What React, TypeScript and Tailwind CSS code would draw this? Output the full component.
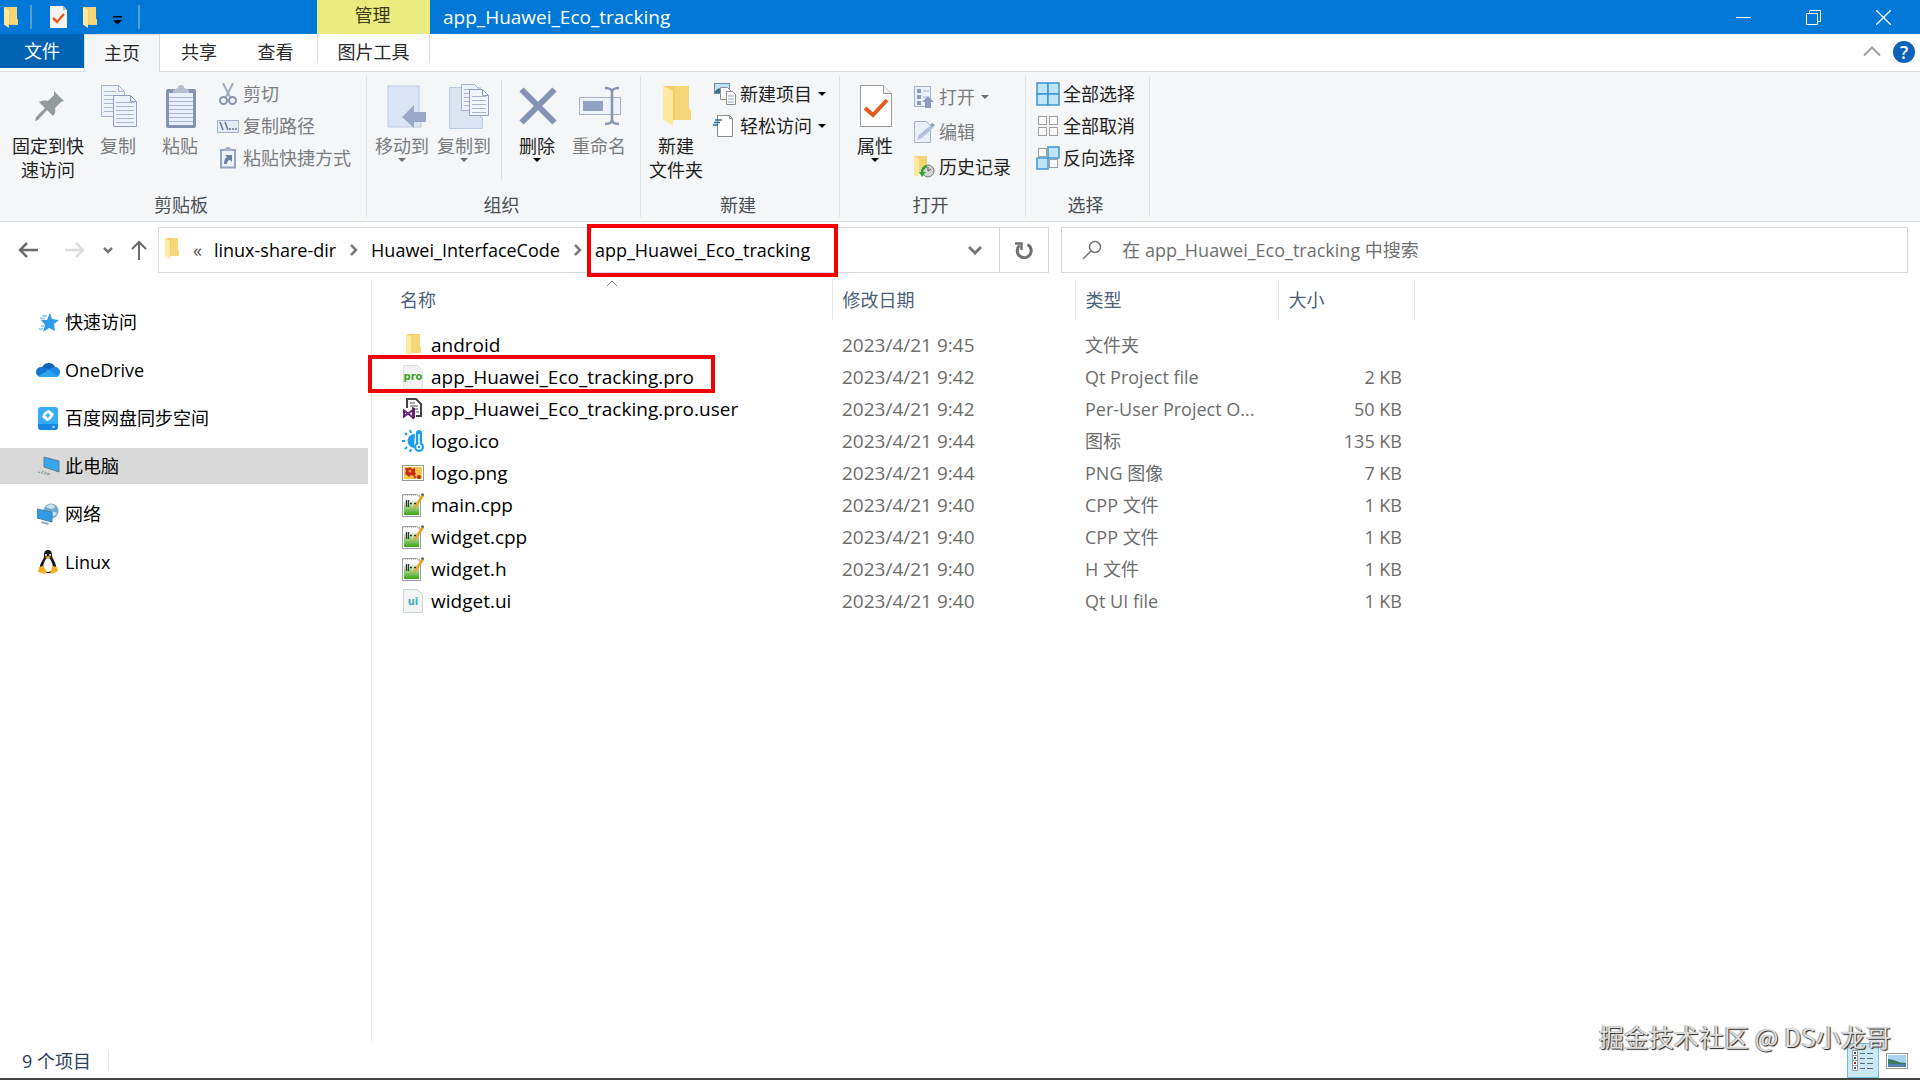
import type { ReactNode } from "react";

/* ---------- shared shapes ---------- */

function Folder({ className = "w-[15px] h-[22px]" }: { className?: string }) {
  return (
    <svg viewBox="0 0 28 40" className={className} preserveAspectRatio="none" aria-hidden="true">
      <path d="M1 0h25v22l2 3v9H8L1 32z" fill="#f3cf68" />
      <path d="M12 0h14v22l2 3v9H12z" fill="#f6d778" />
      <path d="M0 0l10 5v35l-6-4-4-2z" fill="#ffe9a2" />
    </svg>
  );
}

function Caret({ className = "text-black" }: { className?: string }) {
  return (
    <svg viewBox="0 0 8 4" className={"h-1 w-2 shrink-0 " + className} aria-hidden="true">
      <path d="M0 0h8L4 4z" fill="currentColor" />
    </svg>
  );
}

function SheetLines({ x, y, w, n, gap = 4 }: { x: number; y: number; w: number; n: number; gap?: number }) {
  return (
    <g stroke="#a9b6d2" strokeWidth="1">
      {Array.from({ length: n }, (_, i) => (
        <path key={i} d={`M${x} ${y + i * gap + 0.5}h${w}`} />
      ))}
    </g>
  );
}

/* ---------- large ribbon icons ---------- */

const PinIcon = () => (
  <svg width="32" height="32" viewBox="0 0 32 32" aria-hidden="true">
    <path d="M21 1l10 10-3 1-6 6c1 3 0 6-2 8l-6-6-9 10-3 1 1-4 9-9-6-6c2-1 6-2 9-1l6-6z" fill="#949a9b" />
  </svg>
);

const CopyIcon = () => (
  <svg width="36" height="42" viewBox="0 0 36 42" aria-hidden="true">
    <path d="M.5.5h17l6 6v25h-23z" fill="#eef3fb" stroke="#a5b3d1" />
    <path d="M17.5.5v6h6" fill="none" stroke="#a5b3d1" />
    <SheetLines x={3} y={6} w={12} n={6} />
    <path d="M12.5 10.5h17l6 6v25h-23z" fill="#eef3fb" stroke="#8f9fc4" />
    <path d="M29.5 10.5v6h6" fill="none" stroke="#8f9fc4" />
    <SheetLines x={15} y={17} w={18} n={6} />
  </svg>
);

const PasteIcon = () => (
  <svg width="30" height="43" viewBox="0 0 30 43" aria-hidden="true">
    <rect x="0" y="4" width="30" height="39" rx="2" fill="#8492b4" />
    <rect x="3" y="8" width="24" height="32" fill="#e9f0fb" />
    <SheetLines x={3} y={12} w={24} n={7} />
    <path d="M7 8V5l5-2a3 3 0 016 0l5 2v3z" fill="#b5bdcf" />
  </svg>
);

const MoveIcon = () => (
  <svg width="48" height="43" viewBox="-8 0 48 43" aria-hidden="true">
    <path d="M1 1h31v30h2v11H1z" fill="#dbe4f3" stroke="#bdcae3" />
    <path d="M15 32l12-12v7h12v10H27v6z" fill="#9ba9c8" />
  </svg>
);

const CopyToIcon = () => (
  <svg width="48" height="45" viewBox="-8 0 48 45" aria-hidden="true">
    <path d="M.5 3.5h31v30h2v11H.5z" fill="#dbe4f3" stroke="#bdcae3" />
    <path d="M12.5.5h13l5 5v21h-18z" fill="#eef3fb" stroke="#a5b3d1" />
    <SheetLines x={15} y={5} w={9} n={5} />
    <path d="M20.5 5.5h13l6 6v20h-19z" fill="#f3f7fd" stroke="#8f9fc4" />
    <path d="M33.5 5.5v6h6" fill="none" stroke="#8f9fc4" />
    <SheetLines x={23} y={12} w={14} n={5} />
  </svg>
);

const DeleteIcon = () => (
  <svg width="38" height="38" viewBox="0 0 38 38" aria-hidden="true">
    <path d="M2.5 2.5l33 33M35.5 2.5l-33 33" stroke="#8492b6" strokeWidth="6" />
  </svg>
);

const RenameIcon = () => (
  <svg width="42" height="40" viewBox="0 0 42 40" aria-hidden="true">
    <rect x=".5" y="11.5" width="41" height="17" fill="#edf2fb" stroke="#a5b3d1" />
    <rect x="4" y="15" width="20" height="10" fill="#93a1c3" />
    <path d="M26 2c5 0 7 1 7 5v26c0 4-2 5-7 5M40 2c-5 0-7 1-7 5v26c0 4 2 5 7 5" fill="none" stroke="#8793b4" strokeWidth="2.5" />
  </svg>
);

const PropertiesIcon = () => (
  <svg width="32" height="42" viewBox="0 0 32 42" aria-hidden="true">
    <path d="M.5.5h23l8 8v33H.5z" fill="#fff" stroke="#9b9b9b" />
    <path d="M23.5.5v8h8" fill="#eee" stroke="#9b9b9b" />
    <path d="M5 23l8 7 14-15" fill="none" stroke="#e8591c" strokeWidth="4" />
  </svg>
);

/* ---------- small ribbon icons ---------- */

const CutIcon = () => (
  <svg width="22" height="22" viewBox="0 0 22 22" fill="none" aria-hidden="true">
    <path d="M6 0l7 14M16 0L9 14" stroke="#a3abc0" strokeWidth="2" />
    <ellipse cx="6.5" cy="17.500" rx="3.500" ry="3.500" stroke="#8793b4" strokeWidth="2" />
    <ellipse cx="15.5" cy="17.500" rx="3.500" ry="3.500" stroke="#8793b4" strokeWidth="2" />
  </svg>
);

const PathIcon = () => (
  <svg width="22" height="22" viewBox="0 0 22 22" aria-hidden="true">
    <rect x=".5" y="5.5" width="21" height="12" fill="#e3ebf8" stroke="#a5b3d1" />
    <path d="M3 7l3 8M8 7l3 8" stroke="#6b7794" strokeWidth="1.5" />
    <path d="M12 14h2m1 0h2m1 0h2" stroke="#6b7794" strokeWidth="1.5" />
  </svg>
);

const PasteLinkIcon = () => (
  <svg width="22" height="22" viewBox="0 0 22 22" aria-hidden="true">
    <rect x="4" y="3" width="14" height="17.5" fill="#eef3fb" stroke="#94a2c3" strokeWidth="2" />
    <path d="M7 4V2l2-1a2 2 0 014 0l2 1v2z" fill="#a7b2ca" />
    <path d="M7 17c0-4 1-6 3-7l-2-2h7v7l-2-2c-2 0-3 2-3 4z" fill="#6e7ea5" />
  </svg>
);

const NewItemIcon = () => (
  <svg width="24" height="24" viewBox="0 0 24 24" aria-hidden="true">
    <rect x="1.5" y="1.5" width="15" height="10" fill="#bfe2f7" stroke="#6d8ba3" />
    <path d="M2 9l4-3 4 3 3-2v4H2z" fill="#3d6f86" />
    <path d="M7.5 5.5h7l3 3v9h-10z" fill="#fff" stroke="#8c8c8c" />
    <path d="M13.5 9.5h6l3 3v10h-9z" fill="#fff" stroke="#8c8c8c" />
    <path d="M15 14h6M15 17h6M15 20h6" stroke="#8fa3d0" />
  </svg>
);

const EasyAccessIcon = () => (
  <svg width="24" height="24" viewBox="0 0 24 24" aria-hidden="true">
    <path d="M4.5 1.500h12l3 3v18h-15z" fill="#fff" stroke="#8c8c8c" />
    <path d="M16.5 1.500v3h3" fill="none" stroke="#8c8c8c" />
    <path d="M2 6h7M1 8.500h6M0 11h5" stroke="#2f6f9f" strokeWidth="1.5" />
  </svg>
);

const OpenIcon = () => (
  <svg width="22" height="24" viewBox="0 0 22 24" aria-hidden="true">
    <rect x="1.5" y="1.5" width="16" height="20" fill="#eaf0fa" stroke="#a5b3d1" />
    <path d="M4 4h4v4H4zM4 10h4v4H4zM4 16h4v4H4z" fill="#8d9bbd" />
    <path d="M10 6h6M10 12h4" stroke="#a5b3d1" />
    <path d="M15 11l6 6h-3v6h-6v-6H9z" fill="#8d9bbd" />
  </svg>
);

const EditIcon = () => (
  <svg width="22" height="24" viewBox="0 0 22 24" aria-hidden="true">
    <path d="M1.5 1.500h12l4 4v17h-16z" fill="#eaf0fa" stroke="#a5b3d1" />
    <path d="M4 20l2-5L18 5l3 2L9 18z" fill="#b5c1dc" />
    <path d="M17 5l2-2 3 2-2 2z" fill="#8d9bbd" />
  </svg>
);

const HistoryIcon = () => (
  <svg width="22" height="24" viewBox="0 0 22 24" aria-hidden="true">
    <path d="M1 1h13v18H6l-5 1z" fill="#f5d473" />
    <path d="M1 1l5 3v18l-5-2z" fill="#ffe9a2" />
    <circle cx="15" cy="16" r="6" fill="#d5d5d5" stroke="#777" />
    <path d="M15 12v4l3-2" fill="none" stroke="#555" />
    <path d="M9 18c0-4 2-6 5-7" fill="none" stroke="#2ea43a" strokeWidth="2.5" />
    <path d="M6 17h7l-4 5z" fill="#2ea43a" />
  </svg>
);

function Quad({ on }: { on: boolean[] }) {
  const at = [
    [1, 1],
    [12, 1],
    [1, 12],
    [12, 12],
  ];
  return (
    <svg width="24" height="24" viewBox="0 0 24 24" aria-hidden="true">
      {at.map(([x, y], i) =>
        on[i] ? (
          <rect key={i} x={x} y={y} width="11" height="11" fill="#bfe5fb" stroke="#3e96cf" strokeWidth="1.5" />
        ) : (
          <rect key={i} x={x + 1.5} y={y + 1.5} width="8" height="8" fill="#fafafa" stroke="#a0a0a0" />
        ),
      )}
    </svg>
  );
}

/* ---------- sidebar icons ---------- */

const StarIcon = () => (
  <svg width="22" height="22" viewBox="0 0 22 22" aria-hidden="true">
    <path d="M13 2l2 6 7 1-5 4 1 7-6-3-6 4 2-7-4-5h6z" fill="#2f9bea" />
    <path d="M5 5h5M3 7.500h5M4 15h3M2 18h4" stroke="#7fc3f3" strokeWidth="1.5" />
  </svg>
);

const CloudIcon = () => (
  <svg width="24" height="18" viewBox="0 0 24 18" aria-hidden="true">
    <path d="M6 7a7 7 0 0113-1c3 0 5 3 5 6H6z" fill="#0f5fb4" />
    <path d="M5 6c4-1 7 2 10 4L5 16a5 5 0 010-10z" fill="#1275cf" />
    <path d="M9 9l9-3c4 0 6 3 6 5 0 3-2 5-4 5z" fill="#1c8be4" />
    <path d="M2 15L13 9l9 6c-1 1-1 1-3 1H5c-1 0-2 0-3-1z" fill="#2aa7ef" />
  </svg>
);

const BaiduIcon = () => (
  <svg width="20" height="23" viewBox="0 0 20 23" aria-hidden="true">
    <rect width="20" height="22" rx="3" fill="#35adf9" />
    <path d="M0 17h20v3a3 3 0 01-3 3H3a3 3 0 01-3-3z" fill="#1488e6" />
    <path d="M8 4l3-1 5 4-1 2-3-1zM12 13l-3 1-5-4 1-2 3 1z" fill="#fff" />
    <path d="M5 7l3-3 2 2-4 4zM15 9l-3 4-2-2 3-4z" fill="#fff" />
    <path d="M14 20h3" stroke="#fff" />
  </svg>
);

const PcIcon = () => (
  <svg width="24" height="22" viewBox="0 0 24 22" aria-hidden="true">
    <path d="M8 2l15 4v11L8 12z" fill="#36a6ef" stroke="#5c7d95" />
    <path d="M0 17l8-1 10 3-7 2z" fill="#cdd3d6" />
    <path d="M2 17l12 3M6 16l8 3" stroke="#8f979b" strokeDasharray="2 1" />
  </svg>
);

const NetworkIcon = () => (
  <svg width="22" height="22" viewBox="0 0 22 22" aria-hidden="true">
    <circle cx="14" cy="8" r="7.5" fill="#70a9cf" />
    <path d="M9 4c3-4 8-3 9 0-2 3-5 2-9 0zM15 9c3-1 5 1 5 2l-4 3z" fill="#c8dfec" />
    <path d="M0 6l15 3v10L0 15z" fill="#2f9be6" stroke="#4b7fa5" />
    <path d="M5 18l7 2-1 2-7-2z" fill="#9ab0bd" />
  </svg>
);

const TuxIcon = () => (
  <svg width="20" height="24" viewBox="0 0 20 24" aria-hidden="true">
    <path d="M10 0c3 0 4 2 4 6 1 4 4 6 4 11 0 4-4 6-8 6s-8-2-8-6c0-5 4-7 4-11 0-4 1-6 4-6z" fill="#171717" />
    <path d="M10 8c2 0 3 2 4 5 2 5 0 9-4 9s-6-4-4-9c1-3 2-5 4-5z" fill="#fff" />
    <circle cx="8" cy="5" r="1" fill="#fff" />
    <circle cx="12" cy="5" r="1" fill="#fff" />
    <path d="M7 7l3-1 3 1-3 2z" fill="#f0b21a" />
    <path d="M1 17l4-1 4 6-2 2-7-2zM19 17l-4-1-3 6 2 2 6-3z" fill="#efb01c" />
  </svg>
);

/* ---------- file icons ---------- */

const ProIcon = () => (
  <svg width="22" height="24" viewBox="0 0 22 24" aria-hidden="true">
    <path d="M1.5.5h14l5 5v18h-19z" fill="#f3f3f3" stroke="#e0e0e0" />
    <text x="11" y="15" textAnchor="middle" fontFamily="DejaVu Sans, sans-serif" fontSize="10" fontWeight="700" fill="#3aa51f">
      pro
    </text>
  </svg>
);

const UiIcon = () => (
  <svg width="22" height="24" viewBox="0 0 22 24" aria-hidden="true">
    <path d="M1.5.5h14l5 5v18h-19z" fill="#f1f5f6" stroke="#cfd4d6" />
    <text x="11" y="16" textAnchor="middle" fontFamily="DejaVu Sans, sans-serif" fontSize="10" fontWeight="700" fill="#3fb0bd">
      ui
    </text>
  </svg>
);

const VsIcon = () => (
  <svg width="22" height="24" viewBox="0 0 22 24" aria-hidden="true">
    <path d="M5 11V2h9l5 5v12h-5" fill="#fff" stroke="#444" strokeWidth="2" />
    <path d="M8 6h5M8 9h8M11 12h5M14 15h3" stroke="#555" />
    <path d="M2 13.500l9 7V13l-9 6.500z" fill="none" stroke="#68217a" strokeWidth="2" />
    <path d="M10 10l3 1v10l-3 1z" fill="#68217a" />
  </svg>
);

const ThermoIcon = () => (
  <svg width="22" height="24" viewBox="0 0 22 24" aria-hidden="true">
    <path d="M13 5a7 7 0 00-1 14z" fill="#1c9fe8" />
    <path d="M0 12h3M3 4l2 2M8 1l1 3M3 20l2-2M8 23l1-3" stroke="#1c9fe8" strokeWidth="2" />
    <path d="M14 4a3 3 0 016 0v10a5 5 0 11-6 0z" fill="#1c9fe8" />
    <path d="M17 5v11" stroke="#fff" strokeWidth="1.5" />
    <circle cx="17" cy="18" r="2" fill="#1c9fe8" stroke="#fff" strokeWidth="1.5" />
  </svg>
);

const PngIcon = () => (
  <svg width="22" height="24" viewBox="0 0 22 24" aria-hidden="true">
    <rect x=".5" y="4.5" width="21" height="15" fill="#fff" stroke="#999" />
    <rect x="2" y="6" width="18" height="12" fill="#f6c64a" />
    <path d="M3 7h3l2-1 2 2 3-1v4l1 2-2 2-3-1-2 2-2-2-2-1 1-3z" fill="#c9281a" />
    <circle cx="8" cy="10" r="1.5" fill="#f39a1d" />
    <circle cx="17" cy="16" r="2" fill="#b3261a" />
    <circle cx="13" cy="16" r="1.5" fill="#d2452a" />
  </svg>
);

const CppIcon = () => (
  <svg width="22" height="24" viewBox="0 0 22 24" aria-hidden="true">
    <defs>
      <linearGradient id="leaf" x1="0" y1="0" x2="0" y2="1">
        <stop offset="0" stopColor="#eaf7d8" />
        <stop offset="1" stopColor="#3ba316" />
      </linearGradient>
    </defs>
    <path d="M.5 1.500h14l4 3v19H.5z" fill="#fff" stroke="#9aa39a" />
    <rect x="2" y="8" width="15" height="14" fill="url(#leaf)" />
    <path d="M1 2h17" stroke="#999" strokeDasharray="1 1" />
    <path d="M4.5 7v7M6.500 7v7M8 10.500h2M12 10.500h2" stroke="#333" strokeWidth="1.3" />
    <path d="M12 16l1-4L20 1l2 2-8 12z" fill="#e6a323" />
    <path d="M19 2l1-2 2 1v2z" fill="#666" />
  </svg>
);

/* ---------- ribbon building blocks ---------- */

function Group({ label, width, children }: { label: string; width: string; children: ReactNode }) {
  return (
    <section className={"my-1 flex shrink-0 flex-col justify-between border-r border-[#e0e3e6] " + width}>
      <div className="flex pt-1">{children}</div>
      <h2 className="pr-1 text-center text-lg leading-6 text-[#4a4f55]">{label}</h2>
    </section>
  );
}

function Big({
  icon,
  label,
  width,
  off,
  caret,
}: {
  icon: ReactNode;
  label: ReactNode;
  width: string;
  off?: boolean;
  caret?: boolean;
}) {
  return (
    <button
      type="button"
      className={
        "flex shrink-0 flex-col items-center whitespace-nowrap text-lg leading-6 " +
        (off ? "text-[#7b7d80] " : "text-[#1f1f1f] ") +
        width
      }
    >
      <span className="mb-0.5 flex h-[52px] items-center pl-0.5">{icon}</span>
      <span>{label}</span>
      {caret && <Caret className={off ? "text-[#6d6d6d]" : "text-black"} />}
    </button>
  );
}

function Small({ icon, label, off, caret }: { icon: ReactNode; label: string; off?: boolean; caret?: boolean }) {
  return (
    <button
      type="button"
      className={"flex items-center whitespace-nowrap text-lg leading-6 " + (off ? "text-[#7b7d80]" : "text-[#1f1f1f]")}
    >
      <span className="mr-[3px] flex w-6 justify-center">{icon}</span>
      <span>{label}</span>
      {caret && (
        <span className="ml-1.5">
          <Caret className={off ? "text-[#6d6d6d]" : "text-black"} />
        </span>
      )}
    </button>
  );
}

/* ---------- data ---------- */

const places = [
  { name: "快速访问", icon: <StarIcon /> },
  { name: "OneDrive", icon: <CloudIcon /> },
  { name: "百度网盘同步空间", icon: <BaiduIcon /> },
  { name: "此电脑", icon: <PcIcon />, active: true },
  { name: "网络", icon: <NetworkIcon /> },
  { name: "Linux", icon: <TuxIcon /> },
];

const files = [
  { name: "android", icon: <Folder />, date: "2023/4/21 9:45", type: "文件夹", size: "" },
  { name: "app_Huawei_Eco_tracking.pro", icon: <ProIcon />, date: "2023/4/21 9:42", type: "Qt Project file", size: "2 KB", marked: true },
  { name: "app_Huawei_Eco_tracking.pro.user", icon: <VsIcon />, date: "2023/4/21 9:42", type: "Per-User Project O...", size: "50 KB" },
  { name: "logo.ico", icon: <ThermoIcon />, date: "2023/4/21 9:44", type: "图标", size: "135 KB" },
  { name: "logo.png", icon: <PngIcon />, date: "2023/4/21 9:44", type: "PNG 图像", size: "7 KB" },
  { name: "main.cpp", icon: <CppIcon />, date: "2023/4/21 9:40", type: "CPP 文件", size: "1 KB" },
  { name: "widget.cpp", icon: <CppIcon />, date: "2023/4/21 9:40", type: "CPP 文件", size: "1 KB" },
  { name: "widget.h", icon: <CppIcon />, date: "2023/4/21 9:40", type: "H 文件", size: "1 KB" },
  { name: "widget.ui", icon: <UiIcon />, date: "2023/4/21 9:40", type: "Qt UI file", size: "1 KB" },
];

function Crumb({ children, marked }: { children: string; marked?: boolean }) {
  return (
    <span className="relative flex h-full items-center">
      <a href="#" className="text-black">
        {children}
      </a>
      {marked && <span className="pointer-events-none absolute -bottom-[5px] -left-2 -right-7 -top-1 border-4 border-[#f50000]" />}
    </span>
  );
}

const CrumbArrow = () => (
  <svg width="9" height="12" viewBox="0 0 9 12" className="mx-[13px] shrink-0" fill="none" aria-hidden="true">
    <path d="M2 1l5 5-5 5" stroke="#7a7a7a" strokeWidth="2.5" />
  </svg>
);

/* ---------- page ---------- */

export default function App() {
  return (
    <div className="relative flex min-h-screen flex-col bg-white font-['Open_Sans','Noto_Sans_CJK_SC',sans-serif] text-lg leading-6 text-black">
      {/* title bar */}
      <header className="flex h-[34px] shrink-0 items-stretch bg-[#0078d7] text-white">
        <div className="flex w-[317px] shrink-0 items-center">
          <span className="ml-1">
            <Folder className="h-[21px] w-[14px]" />
          </span>
          <span className="ml-3 h-6 w-0.5 bg-[#5b9bd0]" />
          <button type="button" aria-label="属性" className="ml-[18px]">
            <svg width="17" height="22" viewBox="0 0 17 22" aria-hidden="true">
              <path d="M0 0h13l4 4v18H0z" fill="#f6f4f2" />
              <path d="M13 0v4h4z" fill="#b9b9b9" />
              <path d="M3 12l4 4 7-8" fill="none" stroke="#e8591c" strokeWidth="2.5" />
            </svg>
          </button>
          <button type="button" aria-label="新建文件夹" className="ml-4">
            <Folder className="h-[21px] w-[14px]" />
          </button>
          <button type="button" aria-label="自定义快速访问工具栏" className="ml-4 pt-1.5">
            <svg width="9" height="9" viewBox="0 0 9 9" aria-hidden="true">
              <path d="M0 0h9v1.500H0zM0 4h9L4.500 8.500z" fill="#000" />
            </svg>
          </button>
          <span className="ml-4 h-6 w-0.5 bg-[#5b9bd0]" />
        </div>
        <div className="w-[113px] shrink-0 bg-[#ebec80] pr-0.5 pt-[3px] text-center text-[#3b3b1c]">管理</div>
        <h1 className="flex-1 self-center pl-[13px] text-[19px]">app_Huawei_Eco_tracking</h1>
        <div className="flex pr-0.5">
          <button type="button" aria-label="最小化" className="flex w-[70px] items-center justify-center">
            <svg width="15" height="15" viewBox="0 0 15 15" aria-hidden="true">
              <path d="M0 7.500h15" stroke="#fff" />
            </svg>
          </button>
          <button type="button" aria-label="向下还原" className="flex w-[70px] items-center justify-center">
            <svg width="15" height="15" viewBox="0 0 15 15" fill="none" stroke="#fff" aria-hidden="true">
              <path d="M.5 3.500h11v11H.5zM3.500 3.500v-3h11v11h-3" />
            </svg>
          </button>
          <button type="button" aria-label="关闭" className="flex w-[70px] items-center justify-center">
            <svg width="15" height="15" viewBox="0 0 15 15" stroke="#fff" aria-hidden="true">
              <path d="M0 0l15 15M15 0L0 15" strokeWidth="1.3" />
            </svg>
          </button>
        </div>
      </header>

      {/* tabs */}
      <nav className="flex h-[38px] shrink-0 items-stretch border-b border-[#dadbdc] text-[#2b2b2b]">
        <button type="button" className="mb-[3px] w-[84px] bg-[#0063b1] text-white">
          文件
        </button>
        <button type="button" className="-mb-px w-[76px] border-x border-t border-[#dadbdc] bg-[#f5f6f7] pb-0.5">
          主页
        </button>
        <button type="button" className="w-[78px] pb-0.5">
          共享
        </button>
        <button type="button" className="w-[79px] pb-0.5 pr-1">
          查看
        </button>
        <button type="button" className="mb-2 w-[113px] border-x border-[#e3dcd6] pt-1.5">
          图片工具
        </button>
        <div className="flex flex-1 items-center justify-end gap-3 pb-0.5 pr-[5px]">
          <button type="button" aria-label="最小化功能区">
            <svg width="18" height="11" viewBox="0 0 18 11" fill="none" aria-hidden="true">
              <path d="M1 9.500l8-8 8 8" stroke="#a0a0a0" strokeWidth="2" />
            </svg>
          </button>
          <button
            type="button"
            aria-label="帮助"
            className="flex size-[22px] items-center justify-center rounded-full bg-[#0a63b8] font-semibold text-white"
          >
            ?
          </button>
        </div>
      </nav>

      {/* ribbon */}
      <div className="flex h-[150px] shrink-0 border-b border-[#dadbdc] bg-[#f5f6f7]">
        <Group label="剪贴板" width="w-[367px]">
          <div className="flex pl-2">
            <Big icon={<PinIcon />} label={<>固定到快<br />速访问</>} width="w-20" />
            <Big icon={<CopyIcon />} label="复制" width="w-[60px]" off />
            <Big icon={<PasteIcon />} label="粘贴" width="w-[64px]" off />
          </div>
          <div className="flex flex-col gap-2 pl-1 pt-0.5">
            <Small icon={<CutIcon />} label="剪切" off />
            <Small icon={<PathIcon />} label="复制路径" off />
            <Small icon={<PasteLinkIcon />} label="粘贴快捷方式" off />
          </div>
        </Group>
        <Group label="组织" width="w-[274px]">
          <div className="flex pl-1">
            <Big icon={<MoveIcon />} label="移动到" width="w-[62px]" off caret />
            <Big icon={<CopyToIcon />} label="复制到" width="w-[62px]" off caret />
            <span className="ml-1.5 mr-1 h-[100px] w-px bg-[#dcdfe2]" />
            <Big icon={<DeleteIcon />} label="删除" width="w-[62px]" caret />
            <Big icon={<RenameIcon />} label="重命名" width="w-[62px]" off />
          </div>
        </Group>
        <Group label="新建" width="w-[199px]">
          <Big icon={<Folder className="h-10 w-7" />} label={<>新建<br />文件夹</>} width="w-[70px]" />
          <div className="flex flex-col gap-2 pl-0.5 pt-0.5">
            <Small icon={<NewItemIcon />} label="新建项目" caret />
            <Small icon={<EasyAccessIcon />} label="轻松访问" caret />
          </div>
        </Group>
        <Group label="打开" width="w-[186px]">
          <Big icon={<PropertiesIcon />} label="属性" width="w-[70px]" caret />
          <div className="flex flex-col gap-[11px] pl-0.5 pt-[5px]">
            <Small icon={<OpenIcon />} label="打开" off caret />
            <Small icon={<EditIcon />} label="编辑" off />
            <Small icon={<HistoryIcon />} label="历史记录" />
          </div>
        </Group>
        <Group label="选择" width="w-[124px]">
          <div className="flex flex-col gap-2 pl-2.5 pt-0.5">
            <Small icon={<Quad on={[true, true, true, true]} />} label="全部选择" />
            <Small icon={<Quad on={[false, false, false, false]} />} label="全部取消" />
            <Small icon={<Quad on={[false, true, true, false]} />} label="反向选择" />
          </div>
        </Group>
      </div>

      {/* address bar */}
      <div className="flex h-[58px] shrink-0 items-start pr-3 pt-[5px]">
        <div className="flex h-[46px] w-[158px] shrink-0 items-center pl-[18px]">
          <button type="button" aria-label="后退">
            <svg width="20" height="16" viewBox="0 0 20 16" fill="none" stroke="#6b6b6b" strokeWidth="2.5" aria-hidden="true">
              <path d="M20 8H2M9 1L2 8l7 7" />
            </svg>
          </button>
          <button type="button" aria-label="前进" className="ml-[27px]">
            <svg width="20" height="16" viewBox="0 0 20 16" fill="none" stroke="#dcdcdc" strokeWidth="2.5" aria-hidden="true">
              <path d="M0 8h18M11 1l7 7-7 7" />
            </svg>
          </button>
          <button type="button" aria-label="最近浏览的位置" className="ml-[18px]">
            <svg width="10" height="7" viewBox="0 0 10 7" fill="none" stroke="#777" strokeWidth="2.5" aria-hidden="true">
              <path d="M1 1l4 4 4-4" />
            </svg>
          </button>
          <button type="button" aria-label="上移" className="ml-[18px]">
            <svg width="16" height="20" viewBox="0 0 16 20" fill="none" stroke="#6b6b6b" strokeWidth="2" aria-hidden="true">
              <path d="M8 20V2M1 9l7-7 7 7" />
            </svg>
          </button>
        </div>
        <div className="flex h-[46px] min-w-0 flex-[20] items-center border border-[#d9d9d9]">
          <Folder className="mb-1 ml-1.5 h-[21px] w-[14px] shrink-0" />
          <span className="ml-3.5 mr-3 text-[#555]">«</span>
          <Crumb>linux-share-dir</Crumb>
          <CrumbArrow />
          <Crumb>Huawei_InterfaceCode</Crumb>
          <CrumbArrow />
          <Crumb marked>app_Huawei_Eco_tracking</Crumb>
          <div className="ml-auto flex h-full">
            <button type="button" aria-label="以前的位置" className="flex w-12 items-center justify-center">
              <svg width="14" height="10" viewBox="0 0 14 10" fill="none" stroke="#777" strokeWidth="3" aria-hidden="true">
                <path d="M1 2l6 6 6-6" />
              </svg>
            </button>
            <button type="button" aria-label="刷新" className="flex w-[49px] items-center justify-center border-l border-[#d9d9d9]">
              <svg width="18" height="18" viewBox="0 0 18 18" fill="none" stroke="#707070" strokeWidth="3" aria-hidden="true">
                <path d="M12.5 3.500a7 7 0 11-8 1" />
                <path d="M0 2.500h6.500V9" strokeWidth="2.5" />
              </svg>
            </button>
          </div>
        </div>
        <label className="ml-3 flex h-[46px] min-w-0 flex-[19] items-center border border-[#d9d9d9]">
          <svg width="20" height="20" viewBox="0 0 20 20" className="ml-5" fill="none" stroke="#777" strokeWidth="1.5" aria-hidden="true">
            <circle cx="13" cy="7" r="5.5" />
            <path d="M9 11l-8 8" />
          </svg>
          <input
            type="text"
            aria-label="搜索"
            placeholder="在 app_Huawei_Eco_tracking 中搜索"
            className="ml-5 h-full min-w-0 flex-1 bg-transparent outline-none placeholder:text-[#6f6f6f]"
          />
        </label>
      </div>

      {/* places and file list */}
      <div className="flex flex-1">
        <aside className="w-[372px] shrink-0 border-r border-[#ececec] pr-[3px] pt-6">
          <ul className="flex flex-col gap-3">
            {places.map((p) => (
              <li key={p.name}>
                <a
                  href="#"
                  className={"flex h-9 items-center pl-9 " + (p.active ? "bg-[#d9d9d9]" : "")}
                >
                  <span className="mr-[5px] flex w-6 justify-center">{p.icon}</span>
                  {p.name}
                </a>
              </li>
            ))}
          </ul>
        </aside>
        <main className="min-w-0 flex-1">
          <table className="w-[1042px] table-fixed border-collapse text-left">
            <colgroup>
              <col className="w-[460px]" />
              <col className="w-[243px]" />
              <col className="w-[203px]" />
              <col className="w-[136px]" />
            </colgroup>
            <thead>
              <tr className="h-10 text-[#4c607a]">
                <th className="relative border-r border-[#e5e5e5] pl-7 font-normal">
                  名称
                  <svg width="12" height="7" viewBox="0 0 12 7" className="absolute left-[234px] top-0" fill="none" aria-hidden="true">
                    <path d="M1 6l5-5 5 5" stroke="#777" />
                  </svg>
                </th>
                <th className="border-r border-[#e5e5e5] pl-2.5 font-normal">修改日期</th>
                <th className="border-r border-[#e5e5e5] pl-2.5 font-normal">类型</th>
                <th className="border-r border-[#e5e5e5] pl-2.5 font-normal">大小</th>
              </tr>
            </thead>
            <tbody className="text-[#6d6d6d] before:block before:h-[9px]">
              {files.map((f) => (
                <tr key={f.name} className="h-8">
                  <td className="relative pl-[30px] text-[19px] text-black">
                    <span className="flex items-center">
                      <span className="mr-[7px] flex w-[22px] justify-center">{f.icon}</span>
                      {f.name}
                    </span>
                    {f.marked && (
                      <span className="pointer-events-none absolute -left-1 -top-1.5 bottom-0 w-[347px] border-4 border-[#f50000]" />
                    )}
                  </td>
                  <td className="pl-2.5 text-[19px]">{f.date}</td>
                  <td className="whitespace-nowrap pl-2.5">{f.type}</td>
                  <td className="pr-3 text-right">{f.size}</td>
                </tr>
              ))}
            </tbody>
          </table>
        </main>
      </div>

      {/* status bar */}
      <footer className="flex h-[37px] shrink-0 items-center border-b-2 border-[#454545] pl-[22px] text-[#2d405c]">
        <span>9 个项目</span>
        <span className="ml-[17px] h-5 w-px bg-[#e5e5e5]" />
        <div className="ml-auto flex h-full items-center pr-3">
          <button type="button" aria-label="详细信息" className="flex h-full w-8 items-center justify-center border border-[#6fbfe0] bg-[#cbe8f6]">
            <svg width="22" height="22" viewBox="0 0 22 22" aria-hidden="true">
              <path d="M.5.5h5v20h-5z" fill="#fff" stroke="#999" />
              <path d="M.5 5.500h5M.5 10.500h5M.5 15.500h5" stroke="#999" />
              <path d="M2 3h2M2 8h2M2 18h2" stroke="#357" strokeWidth="2" />
              <path d="M2 13h2" stroke="#a22" strokeWidth="2" />
              <path d="M8 3.500h5m2 0h6M8 8.500h5m2 0h6M8 13.500h5m2 0h6M8 18.500h5m2 0h6" stroke="#5b6b75" />
            </svg>
          </button>
          <button type="button" aria-label="大缩略图" className="ml-[7px]">
            <svg width="22" height="16" viewBox="0 0 22 16" aria-hidden="true">
              <rect x=".5" y=".5" width="21" height="15" fill="#fff" stroke="#999" />
              <path d="M2 2h18v12H2z" fill="#a9d2f5" />
              <path d="M2 6c6 0 10 4 18 4v2H2z" fill="#3d7b5a" />
              <path d="M2 11h18v3H2z" fill="#4f83b0" />
            </svg>
          </button>
        </div>
      </footer>

      <p className="pointer-events-none absolute bottom-7 right-[29px] font-['Noto_Sans_CJK_SC',sans-serif] text-[25px] leading-8 text-[#dedede] [text-shadow:1px_1px_1px_#222,-1px_0_1px_#999]">
        掘金技术社区 @ DS小龙哥
      </p>
    </div>
  );
}
